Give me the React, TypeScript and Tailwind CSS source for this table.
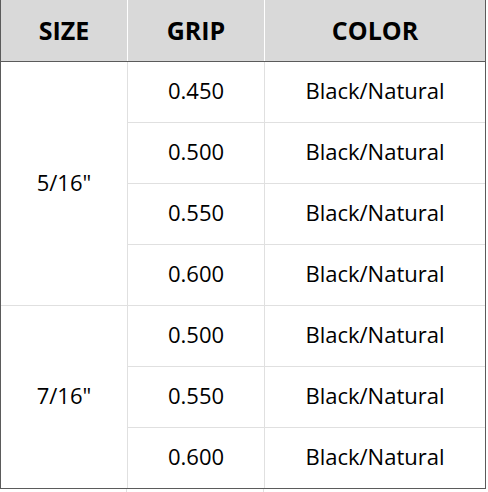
const groups = [
  { size: '5/16"', grips: ['0.450', '0.500', '0.550', '0.600'] },
  { size: '7/16"', grips: ['0.500', '0.550', '0.600'] },
];

export default function App() {
  return (
    <div className="h-[492px] w-[488px] overflow-hidden bg-white text-black" style={{ fontFamily: '"Open Sans", "Noto Sans", sans-serif' }}>
      <div className="w-[486px] border-x border-b border-[#5b5b5b]">
        <div className="flex h-[62px] border-b border-[#5b5b5b] bg-[#d9d9d9] text-[25px] font-bold">
          <div className="flex w-[127px] items-center justify-center border-r border-white">SIZE</div>
          <div className="flex w-[137px] items-center justify-center border-r border-white">GRIP</div>
          <div className="flex flex-1 items-center justify-center">COLOR</div>
        </div>

        {groups.map((g, gi) => (
          <div key={gi} className={`flex text-[22px] ${gi < groups.length - 1 ? 'border-b border-[#e0e0e0]' : ''}`}>
            <div className="flex w-[127px] items-center justify-center border-r border-[#e0e0e0] pb-[3px]">{g.size}</div>
            <div className="flex flex-1 flex-col">
              {g.grips.map((grip, i) => {
                const last = i === g.grips.length - 1;
                return (
                  <div key={i} className={`flex ${last ? 'h-[60px]' : 'h-[61px] border-b border-[#e0e0e0]'}`}>
                    <div className="flex w-[137px] items-center justify-center border-r border-[#e0e0e0] pb-[3px]">{grip}</div>
                    <div className="flex flex-1 items-center justify-center pb-[3px]">Black/Natural</div>
                  </div>
                );
              })}
            </div>
          </div>
        ))}
      </div>
      <div className="flex h-[4px] w-[486px]">
        <div className="w-[127px] border-r border-[#e0e0e0]" />
        <div className="w-[137px] border-r border-[#e0e0e0]" />
      </div>
    </div>
  );
}
